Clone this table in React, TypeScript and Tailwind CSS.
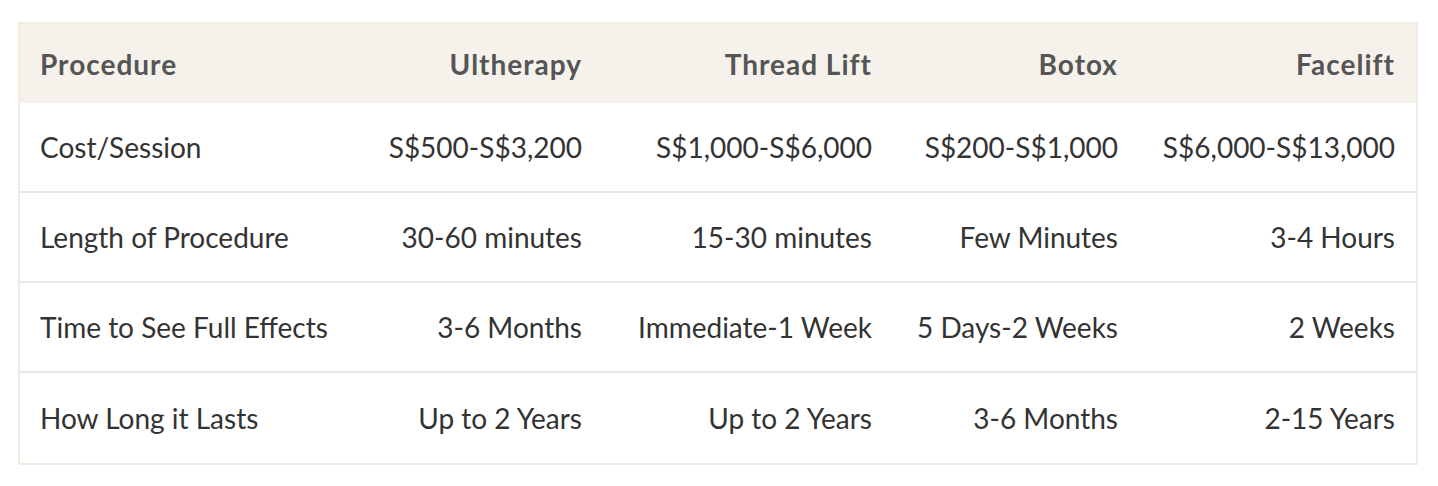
const head = ["Procedure", "Ultherapy", "Thread Lift", "Botox", "Facelift"];

const rows = [
  ["Cost/Session", "S$500-S$3,200", "S$1,000-S$6,000", "S$200-S$1,000", "S$6,000-S$13,000"],
  ["Length of Procedure", "30-60 minutes", "15-30 minutes", "Few Minutes", "3-4 Hours"],
  ["Time to See Full Effects", "3-6 Months", "Immediate-1 Week", "5 Days-2 Weeks", "2 Weeks"],
  ["How Long it Lasts", "Up to 2 Years", "Up to 2 Years", "3-6 Months", "2-15 Years"],
];

const cols = "grid grid-cols-[320px_263px_290px_246px_277px]";

export default function App() {
  return (
    <div className="min-h-screen bg-white pt-[22px] pl-[18px] font-['Lato',sans-serif]">
      <div className="w-[1400px] border-2 border-[#efece2]">
        <div className={`${cols} h-[79px] items-center bg-[#f4f2eb] text-[28px] font-bold tracking-[1px] text-[#555555]`}>
          {head.map((h, i) => (
            <div key={h} className={`px-[21px] ${i === 0 ? "pl-[20px] text-left" : "text-right"}`}>
              {h}
            </div>
          ))}
        </div>
        {rows.map((r, ri) => (
          <div
            key={r[0]}
            className={`${cols} h-[90px] items-center text-[28px] text-[#333333] ${
              ri < rows.length - 1 ? "border-b-2 border-[#e9e9e9]" : ""
            }`}
          >
            {r.map((c, i) => (
              <div key={i} className={`px-[21px] whitespace-nowrap ${i === 0 ? "pl-[20px] text-left" : "text-right"}`}>
                {c}
              </div>
            ))}
          </div>
        ))}
      </div>
    </div>
  );
}
